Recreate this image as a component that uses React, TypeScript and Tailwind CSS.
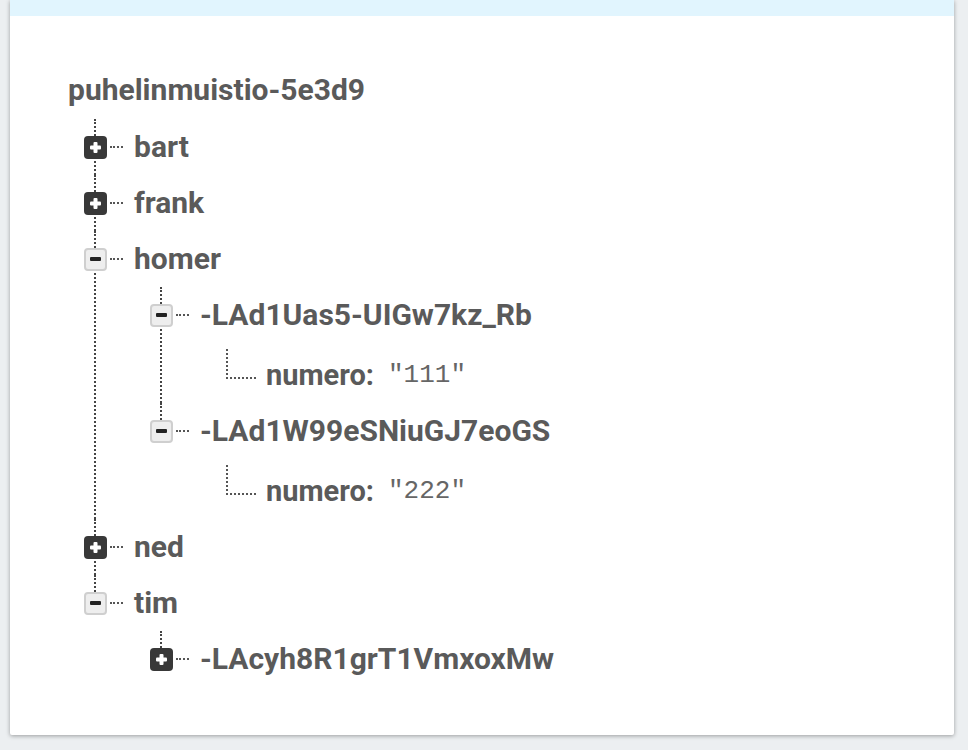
import type { ReactNode } from 'react'

type TreeNode = {
  key: string
  children?: TreeNode[]
  value?: string
  expanded?: boolean
}

const data: TreeNode[] = [
  { key: 'bart', children: [] },
  { key: 'frank', children: [] },
  {
    key: 'homer',
    expanded: true,
    children: [
      { key: '-LAd1Uas5-UIGw7kz_Rb', expanded: true, children: [{ key: 'numero', value: '"111"' }] },
      { key: '-LAd1W99eSNiuGJ7eoGS', expanded: true, children: [{ key: 'numero', value: '"222"' }] },
    ],
  },
  { key: 'ned', children: [] },
  {
    key: 'tim',
    expanded: true,
    children: [{ key: '-LAcyh8R1grT1VmxoxMw', children: [] }],
  },
]

function ToggleBox({ expanded }: { expanded?: boolean }) {
  if (expanded) {
    return (
      <div className="w-[23px] h-[23px] rounded-[4px] bg-[#eeeeee] border-2 border-[#cfcfcf] flex items-center justify-center shrink-0 relative z-10">
        <div className="w-[11px] h-[4px] rounded-[1px] bg-[#222]" />
      </div>
    )
  }
  return (
    <div className="w-[23px] h-[23px] rounded-[4px] bg-[#383838] flex items-center justify-center shrink-0 relative z-10">
      <svg width="13" height="13" viewBox="0 0 13 13">
        <rect x="4.5" y="1" width="4" height="11" rx="1" fill="#fff" />
        <rect x="1" y="4.5" width="11" height="4" rx="1" fill="#fff" />
      </svg>
    </div>
  )
}

function Item({ node, last }: { node: TreeNode; last: boolean }) {
  // leaf value row
  if (node.value !== undefined) {
    return (
      <div className="relative h-[60px] flex items-center">
        <div className="absolute left-[10px] top-[6px] h-[30px] w-[30px] border-l-2 border-b-2 border-dotted border-[#555]" />
        <div className="pl-[50px] pt-[4px] flex items-center">
          <span className="font-bold text-[29px] text-[#5a5a5a]">{node.key}:</span>
          <span className="ml-[14px] text-[26px] text-[#666] font-['Liberation_Mono',monospace]">{node.value}</span>
        </div>
      </div>
    )
  }

  return (
    <div className="relative">
      {/* line above the box */}
      <div className="absolute left-[10px] top-0 h-[17px] border-l-2 border-dotted border-[#444]" />
      {!last && (
        <div className="absolute left-[10px] top-[38px] bottom-0 border-l-2 border-dotted border-[#444]" />
      )}
      <div className="h-[56px] flex items-center">
        <ToggleBox expanded={node.expanded} />
        <div className="w-[13px] ml-[3px] border-t-2 border-dotted border-[#555]" />
        <span className="ml-[11px] font-bold text-[30px] text-[#5a5a5a]">{node.key}</span>
      </div>
      {node.expanded && node.children && node.children.length > 0 && (
        <Children nodes={node.children} />
      )}
    </div>
  )
}

function Children({ nodes }: { nodes: TreeNode[] }) {
  return (
    <div className="ml-[66px]">
      {nodes.map((n, i) => (
        <Item key={n.key + i} node={n} last={i === nodes.length - 1} />
      ))}
    </div>
  )
}

function Card({ children }: { children: ReactNode }) {
  return (
    <div className="ml-[10px] w-[944px] h-[735px] bg-white shadow-[0_1px_4px_rgba(0,0,0,0.35)] rounded-b-[2px]">
      <div className="h-[16px] bg-[#e1f5fe]" />
      {children}
    </div>
  )
}

export default function App() {
  return (
    <div className="w-[968px] h-[750px] bg-[#eceff1] overflow-hidden font-['Roboto',sans-serif] leading-none">
      <Card>
        <div className="pl-[58px] pt-[54px]">
          <div className="h-[40px] flex items-center font-bold text-[30px] text-[#5a5a5a]">
            puhelinmuistio-5e3d9
          </div>
          <div className="mt-[9px] -ml-[50px]">
            <Children nodes={data} />
          </div>
        </div>
      </Card>
    </div>
  )
}
